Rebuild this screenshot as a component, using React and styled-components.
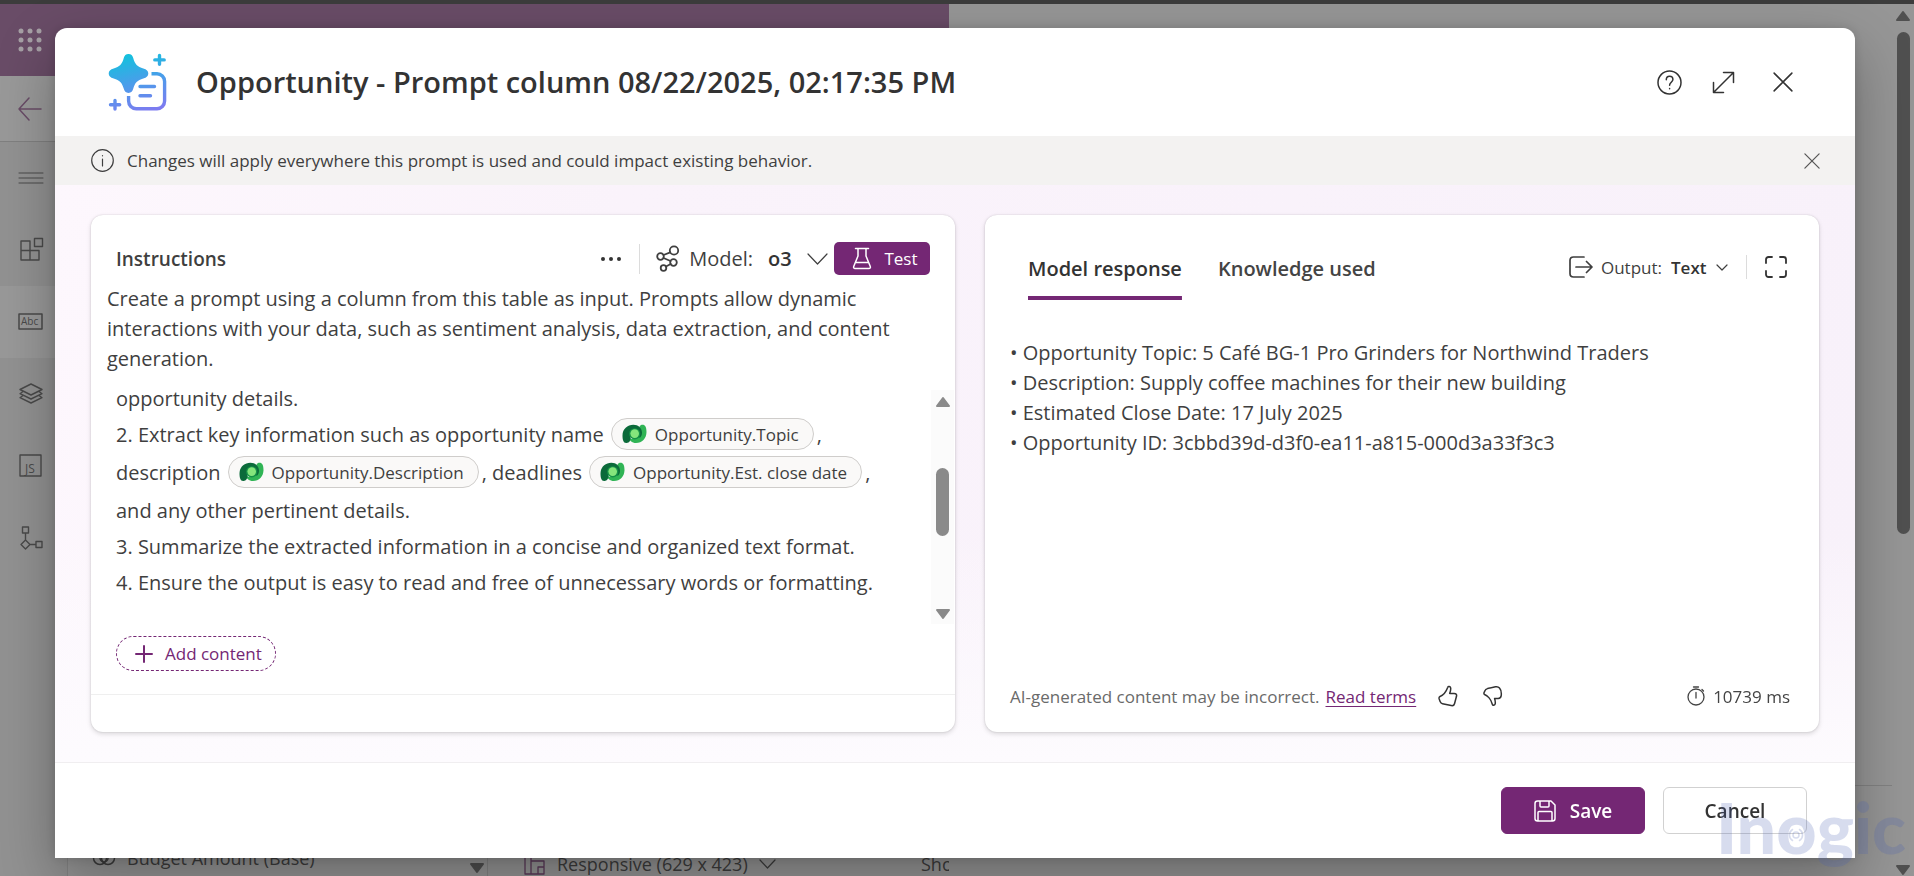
import React from "react";
import styled, { createGlobalStyle, css } from "styled-components";

const color = {
  brand: "#742774",
  ink: "#333333",
  text: "#3f3f3f",
  muted: "#6a6a6a",
};

const Global = createGlobalStyle`
  *, *::before, *::after { box-sizing: border-box; }
  body {
    margin: 0;
    overflow: hidden;
    font-family: "Segoe UI", "Open Sans", "Noto Sans", sans-serif;
    font-size: 18px;
    color: ${color.text};
    background: #969696;
  }
  button, select { font: inherit; color: inherit; }
  svg { display: block; flex: none; }
`;

/* ---------- page behind the dialog ---------- */

const Page = styled.div`
  height: 100vh;
  display: grid;
  grid-template-columns: calc(50% - 8px) 1fr 22px;
  border-top: 4px solid #3c3c3c;
`;

const Designer = styled.div`
  display: flex;
  flex-direction: column;
  min-width: 0;
`;

const SuiteBar = styled.header`
  height: 72px;
  flex: none;
  padding-left: 18px;
  display: flex;
  align-items: center;
  background: #694c67;
`;

const Workspace = styled.div`
  flex: 1;
  min-height: 0;
  display: flex;
`;

const Rail = styled.nav`
  width: 68px;
  flex: none;
  border-right: 1px solid #868686;
  background: #929292;
`;

const RailButton = styled.button`
  width: 100%;
  height: 72px;
  padding: 0 0 0 18px;
  display: flex;
  align-items: center;
  border: 0;
  color: #4a4a4a;
  background: ${(p) => (p.$selected ? "#999999" : "#929292")};
  ${(p) =>
    p.$back &&
    css`
      height: 66px;
      color: #694c67;
      background: #999999;
      border-bottom: 1px solid #808080;
    `}
`;

const Column = styled.div`
  display: flex;
  align-items: flex-end;
  height: 100%;
  padding: 0 0 6px 24px;
  color: #3d3d3d;
  white-space: nowrap;
`;

const FieldColumn = styled(Column)`
  width: 420px;
  flex: none;
  justify-content: space-between;
  border-right: 1px solid #868686;
`;

const ColumnArrow = styled.span`
  height: 8px;
  margin-right: 2px;
  color: #505050;
`;

const PreviewColumn = styled(Column)`
  flex: 1;
  min-width: 0;
  overflow: hidden;
  gap: 12px;
  padding: 0 0 0 36px;
`;

const PushRight = styled.span`
  margin-left: auto;
  width: 28px;
`;

const Field = styled.span`
  display: flex;
  align-items: center;
  gap: 11px;
  font-size: 18px;
  line-height: 24px;
`;

const Properties = styled.aside`
  display: flex;
  flex-direction: column;
  justify-content: flex-end;
  padding-bottom: 90px;
`;

const Rule = styled.hr`
  width: 100%;
  margin: 0;
  border: 0;
  border-top: 1px solid #828282;
`;

/* ---------- scroll bars ---------- */

const ScrollTrack = styled.div`
  display: flex;
  flex-direction: column;
  align-items: center;
  justify-content: space-between;
  color: ${(p) => (p.$dim ? "#505050" : "#8a8a8a")};
  background: ${(p) => (p.$dim ? "transparent" : "#fbfbfb")};
  padding: ${(p) => (p.$dim ? "6px 0 0 0" : "6px 0 4px")};
`;

const ScrollThumb = styled.div`
  width: 13px;
  flex: 0 0 ${(p) => p.$length};
  border-radius: 7px;
  background: currentColor;
`;

const ScrollSpace = styled.div`
  flex: ${(p) => p.$share};
`;

/* ---------- dialog ---------- */

const Overlay = styled.div`
  position: fixed;
  inset: 0;
  display: flex;
  padding: 28px 59px 18px 55px;
`;

const Dialog = styled.section`
  flex: 1;
  min-width: 0;
  display: flex;
  flex-direction: column;
  overflow: hidden;
  border-radius: 12px 12px 0 0;
  background: #fff;
`;

const DialogShadow = styled.div`
  flex: 1;
  min-width: 0;
  display: flex;
  border-radius: 12px 12px 0 0;
  box-shadow: 0 0 12px rgba(0, 0, 0, 0.14), 0 24px 60px rgba(0, 0, 0, 0.3);
`;

const DialogHeader = styled.header`
  height: 108px;
  flex: none;
  display: flex;
  align-items: center;
  padding: 0 50px 0 53px;
`;

const DialogTitle = styled.h1`
  flex: 1;
  margin: 0 0 0 29px;
  font-size: 29px;
  line-height: 36px;
  font-weight: 600;
  color: ${color.ink};
`;

const HeaderActions = styled.div`
  display: flex;
  gap: 22px;
`;

const IconButton = styled.button`
  width: ${(p) => p.$width || 32}px;
  height: 32px;
  padding: 0;
  display: flex;
  align-items: center;
  justify-content: center;
  flex: none;
  border: 0;
  background: none;
  color: ${(p) => p.$tone || color.ink};
`;

const Notice = styled.div`
  height: 49px;
  flex: none;
  display: flex;
  align-items: center;
  gap: 13px;
  padding: 0 35px 0 36px;
  background: #f3f2f1;
`;

const NoticeText = styled.p`
  flex: 1;
  margin: 0;
  font-size: 17px;
  line-height: 24px;
`;

const DialogBody = styled.div`
  flex: 1;
  min-height: 0;
  display: grid;
  grid-template-columns: 864fr 834fr;
  gap: 30px;
  padding: 30px 36px;
  background:
    linear-gradient(180deg, rgba(253, 251, 254, 0) 60%, #fdfbfe 100%),
    linear-gradient(100deg, #fdf7fd 0%, #faf3fb 30%, #f8f1fa 100%);
`;

const Panel = styled.section`
  min-width: 0;
  display: flex;
  flex-direction: column;
  border-radius: 12px;
  background: #fff;
  box-shadow: 0 0 2px rgba(0, 0, 0, 0.14), 0 2px 5px rgba(0, 0, 0, 0.14);
`;

const DialogFooter = styled.footer`
  height: 96px;
  flex: none;
  display: flex;
  align-items: center;
  justify-content: flex-end;
  gap: 18px;
  padding: 0 48px;
  border-top: 1px solid #f0eef0;
`;

const FooterButton = styled.button`
  width: 144px;
  height: 47px;
  display: flex;
  align-items: center;
  justify-content: center;
  gap: 14px;
  padding: 0;
  border-radius: 6px;
  font-size: 19px;
  font-weight: 600;
  border: 1px solid ${(p) => (p.$primary ? color.brand : "#d1d1d1")};
  color: ${(p) => (p.$primary ? "#fff" : color.ink)};
  background: ${(p) => (p.$primary ? color.brand : "#fff")};
`;

/* ---------- instructions panel ---------- */

const PanelHeader = styled.div`
  display: flex;
  align-items: center;
  height: 33px;
  margin: 27px 25px 9px;
`;

const PanelTitle = styled.h2`
  flex: 1;
  margin: 0;
  font-size: 19px;
  font-weight: 600;
`;

const Divider = styled.span`
  width: 1px;
  height: ${(p) => p.$height}px;
  margin: 0 ${(p) => p.$gap}px;
  background: #dcdcdc;
`;

const Picker = styled.div`
  display: flex;
  align-items: center;
  font-size: ${(p) => p.$size}px;
  white-space: nowrap;

  label { margin: ${(p) => p.$labelMargin}; }
`;

const PickerSelect = styled.select`
  appearance: none;
  border: 0;
  padding: 0;
  margin-right: ${(p) => p.$gap}px;
  background: none;
  font-weight: 600;
  color: ${color.ink};
`;

const TestButton = styled.button`
  width: 96px;
  height: 33px;
  margin-left: 6px;
  padding: 0 0 0 6px;
  display: flex;
  align-items: center;
  justify-content: center;
  gap: 12px;
  border: 0;
  border-radius: 5px;
  font-size: 17px;
  color: #fff;
  background: ${color.brand};
`;

const Hint = styled.p`
  margin: 0 60px 6px 16px;
  font-size: 20px;
  line-height: 30px;
`;

const EditorRow = styled.div`
  flex: 1;
  min-height: 0;
  display: flex;
  justify-content: space-between;
  padding-right: 1px;

  ${ScrollTrack} {
    width: 23px;
    margin-top: 10px;
  }
`;

const Editor = styled.div`
  padding-left: 25px;
  font-size: 20px;
`;

const Line = styled.div`
  display: flex;
  align-items: center;
  min-height: ${(p) => (p.$tall ? 40 : 36)}px;
  white-space: pre;
`;

const Chip = styled.span`
  height: 32px;
  display: inline-flex;
  align-items: center;
  gap: 8px;
  margin: 0 3px 0 7px;
  padding: 0 14px 0 10px;
  border: 1px solid #cfcdcb;
  border-radius: 16px;
  background: #faf9f8;
  font-size: 17px;
`;

const EditorActions = styled.div`
  padding: 12px 25px 23px;
  border-bottom: 1px solid #efefef;
`;

const AddButton = styled.button`
  height: 35px;
  display: flex;
  align-items: center;
  gap: 12px;
  padding: 0 13px 0 18px;
  border: 1px dashed ${color.brand};
  border-radius: 18px;
  font-size: 17px;
  color: ${color.brand};
  background: #fff;
`;

const PanelFoot = styled.div`
  height: 37px;
  flex: none;
`;

/* ---------- response panel ---------- */

const ResponseHeader = styled.div`
  display: flex;
  align-items: center;
  justify-content: space-between;
  height: 48px;
  margin: 28px 32px 47px 43px;
`;

const Tabs = styled.div`
  display: flex;
  gap: 36px;
  margin-top: 20px;
`;

const Tab = styled.button`
  padding: 0 0 17px;
  font-size: 20px;
  line-height: 28px;
  font-weight: 600;
  border: 0;
  background: linear-gradient(${(p) => (p.$active ? color.brand : "transparent")} 0 0) bottom / 100% 4px no-repeat;
  color: ${(p) => (p.$active ? color.ink : "#444")};
  white-space: nowrap;
`;

const Tools = styled.div`
  display: flex;
  align-items: center;
`;

const Response = styled.ul`
  flex: 1;
  margin: 0;
  padding: 0 25px;
  list-style: none;
  font-size: 20px;
  line-height: 30px;

  li::before { content: "• "; }
`;

const ResponseFooter = styled.div`
  display: flex;
  align-items: center;
  height: 32px;
  margin: 0 29px 20px 25px;
  font-size: 17px;
  color: ${color.muted};
  white-space: nowrap;
`;

const Terms = styled.a`
  margin: 0 16px 0 6px;
  color: ${color.brand};
  text-decoration: underline;
  text-underline-offset: 3px;
`;

const Feedback = styled.div`
  display: flex;
  gap: 13px;
`;

const Duration = styled.span`
  display: flex;
  align-items: center;
  gap: 8px;
  margin-left: auto;
  color: #444;
`;

const Watermark = styled.div`
  position: fixed;
  right: 8px;
  bottom: 12px;
  font-family: Lato, sans-serif;
  font-size: 70px;
  line-height: 74px;
  font-weight: 900;
  color: rgba(72, 96, 176, 0.22);
  pointer-events: none;
`;

const WatermarkRing = styled.span`
  position: relative;

  svg {
    position: absolute;
    inset: 0;
    margin: auto;
    top: 16px;
  }
`;

/* ---------- icons ---------- */

const Svg = ({ w = 24, h = w, sw = 1, box, children }) => (
  <svg
    width={w}
    height={h}
    viewBox={box || `0 0 ${w} ${h}`}
    fill="none"
    stroke="currentColor"
    strokeWidth={sw}
    strokeLinecap="round"
    strokeLinejoin="round"
    aria-hidden="true"
  >
    {children}
  </svg>
);

const Triangle = ({ down }) => (
  <Svg w={16} h={12}>
    <path d={down ? "M2 2h12L8 10z" : "M2 10h12L8 2z"} fill="currentColor" strokeWidth="2" />
  </Svg>
);

const Waffle = () => (
  <svg width="26" height="26" viewBox="0 0 26 26" fill="#a6a0a5" aria-hidden="true">
    {[4, 13, 22].map((y) => [3, 12, 21].map((x) => <circle key={`${x}-${y}`} cx={x} cy={y} r="2.5" />))}
  </svg>
);

const PromptLogo = () => (
  <svg width="59" height="60" viewBox="0 0 59 60" aria-hidden="true">
    <defs>
      <linearGradient id="promptFill" gradientUnits="userSpaceOnUse" x1="20" y1="0" x2="36" y2="60">
        <stop offset="0" stopColor="#0fc4dc" />
        <stop offset="0.5" stopColor="#499eea" />
        <stop offset="1" stopColor="#7d7bf0" />
      </linearGradient>
    </defs>
    <path
      d="M20.500 2c2.600 0 4.200 1.600 4.800 4.200 1.400 5.800 4.200 8.600 10 10.200 3.400.9 5 2.500 5 5s-1.600 4.100-5 5c-5.800 1.600-8.600 4.400-10 10.200-.6 2.600-2.200 4.400-4.800 4.400s-4.200-1.800-4.800-4.400c-1.400-5.800-4.200-8.600-10-10.200-3.400-.9-5-2.500-5-5s1.600-4.100 5-5c5.800-1.600 8.600-4.400 10-10.200.6-2.600 2.200-4.200 4.800-4.200z"
      fill="url(#promptFill)"
    />
    <g fill="none" stroke="url(#promptFill)" strokeWidth="3.400" strokeLinecap="round">
      <path d="M51.500 3.500v8.800M46.800 7.900h9.400M7 48.500v8.600M2.500 52.800h9.200" />
      <path d="M32 34.500h14.500M32 43.700h10.500" />
      <path strokeLinecap="butt" d="M43.500 21.800h5.500a7.600 7.600 0 0 1 7.600 7.600v19.700a7.600 7.600 0 0 1-7.600 7.600H28.200a7.600 7.600 0 0 1-7.600-7.600v-5" />
    </g>
  </svg>
);

const Dataverse = () => (
  <svg width="25" height="20" viewBox="0 0 25 20" aria-hidden="true">
    <path d="M19 1c3.500-1 5.500 1 5.500 7 0 6.500-4.500 11-10.500 11-4 0-7-2.500-7-6 3 4 10 2 10-5 0-4 0-6 2-7z" fill="#30b455" />
    <path d="M4.500 19C1.500 19.300.5 16 .5 11.500.5 5 5.500.700 11.300.700c5 0 8.700 3.300 8.700 8 0 2-.7 3.600-1.800 4.800L8.500 13c.3 3-1 6-4 6z" fill="#0b6a3a" />
    <circle cx="12.700" cy="9.800" r="5.600" fill="#159247" />
    <circle cx="12.700" cy="9.600" r="4.300" fill="#85e57c" />
  </svg>
);

const CloseIcon = ({ size, sw }) => (
  <Svg w={size} sw={sw} box="0 0 18 18"><path d="M1 1l16 16M17 1L1 17" /></Svg>
);

const Chevron = ({ w, h }) => (
  <Svg w={w} h={h} box={`0 0 ${w} ${h}`} sw={1.2}><path d={`M1 1L${w / 2} ${h - 1}L${w - 1} 1`} /></Svg>
);

const ThumbUp = () => (
  <Svg w={20} h={22} sw={1.500}>
    <path d="M2 11.500C4.500 10.500 8 7 9.800 2.200c.4-1.200 2.700-.8 2.900 1 .1 1.600-.4 3.700-1 5.200h4.500c1.900 0 2.700 1.200 2.300 2.900l-2 7.400c-.4 1.500-1.600 2.300-3.300 1.900L4.500 18.800c-1.400-.3-1.900-1-2.400-2.300L1.200 14c-.4-1.200-.2-2 .8-2.500z" />
  </Svg>
);

const ThumbDown = () => (
  <Svg w={20} h={22} sw={1.500}>
    <path d="M1.500 9.500C4 10.500 8 14 9.300 19.200c.4 1.500 2.600 1.200 2.900-.4.300-1.800-.1-3.700-.6-5.300h3.600c2 0 2.800-1 3-2.800.4-3.300-.1-5.900-1.700-7.700-1-1.200-2.300-1.500-4-1.200L4.500 3.600C3 4 2.300 4.600 1.900 5.900L1.100 7.500c-.3.900-.2 1.600.4 2z" />
  </Svg>
);

const Model = () => (
  <Svg w={24} h={27} sw={1.800}>
    <circle cx="18" cy="5.500" r="4.200" /><circle cx="4.500" cy="11.500" r="3.300" />
    <circle cx="17.500" cy="17.500" r="3.300" /><circle cx="7.500" cy="23" r="2.800" />
    <path d="M7.500 10l6.800-2.700M7.500 13l7 3M10 21.500l4.700-2.500" />
  </Svg>
);

const railItems = [
  ["Menu", <Svg w={26} h={14}><path d="M1 2h24M1 7h24M1 12h24" /></Svg>],
  ["Components", <Svg w={26} sw={1.400}><path d="M3 4h9v19H3zM3 13.500h18V23H12M12 13.500V23M16.500 1.500h8v8h-8z" /></Svg>],
  ["Table columns", <Svg w={26} h={18} sw={1.500}>
    <rect x="1" y="1" width="23" height="15" />
    <text x="3" y="12" fontSize="10" fill="currentColor" stroke="none">Abc</text>
  </Svg>, true],
  ["Tree view", <Svg w={26} h={24} sw={1.400}>
    <path d="M13 2l11 5.500L13 13 2 7.500zM5 9.500l-3 2.200L13 17l11-5.300-3-2.200M5 13.500l-3 2.200L13 21l11-5.300-3-2.200" />
  </Svg>],
  ["Form libraries", <Svg w={26} h={24} sw={1.400}>
    <rect x="2" y="1" width="21" height="21" />
    <text x="7" y="19" fontSize="12" fill="currentColor" stroke="none">JS</text>
  </Svg>],
  ["Business rules", <Svg w={26} sw={1.400}><path d="M4.500 2h6v6h-6zM7.500 8v7M7.500 15l4.500 4.500L7.500 24 3 19.500zM12 19.500h6M18 16.500h6v6h-6z" /></Svg>],
];

function VariableChip({ children }) {
  return <Chip><Dataverse />{children}</Chip>;
}

function Background() {
  return (
    <Page>
      <Designer>
        <SuiteBar><Waffle /></SuiteBar>
        <Workspace>
          <Rail>
            <RailButton $back aria-label="Back">
              <Svg w={26} h={24} sw={1.500}><path d="M23 12H1M11 1L1 12l10 11" /></Svg>
            </RailButton>
            {railItems.map(([label, icon, selected]) => (
              <RailButton key={label} aria-label={label} $selected={selected}>{icon}</RailButton>
            ))}
          </Rail>
          <FieldColumn>
            <Field>
              <Svg w={24} h={16} sw={1.500}><circle cx="8" cy="8" r="6.500" /><circle cx="16" cy="8" r="6.500" /><circle cx="12" cy="8" r="4" /></Svg>
              Budget Amount (Base)
            </Field>
            <ColumnArrow><Triangle down /></ColumnArrow>
          </FieldColumn>
          <PreviewColumn>
            <Field>
              <Svg w={22} sw={1.300}><g stroke="#5c3a5a"><path d="M1 1h6v20H1zM7 8h13v13H7M14 14h6v7h-6z" /></g></Svg>
              Responsive (629 x 423)
              <Chevron w={17} h={10} />
            </Field>
            <PushRight>Sho</PushRight>
          </PreviewColumn>
        </Workspace>
      </Designer>
      <Properties><Rule /></Properties>
      <ScrollTrack $dim>
        <Triangle />
        <ScrollSpace $share="0 0 10px" />
        <ScrollThumb $length="58%" />
        <ScrollSpace $share={1} />
        <Triangle down />
      </ScrollTrack>
    </Page>
  );
}

function Instructions() {
  return (
    <Panel>
      <PanelHeader>
        <PanelTitle>Instructions</PanelTitle>
        <IconButton $width={24} aria-label="More options">
          <Svg w={22} h={6}><g fill="currentColor" stroke="none"><circle cx="3" cy="3" r="2" /><circle cx="11" cy="3" r="2" /><circle cx="19" cy="3" r="2" /></g></Svg>
        </IconButton>
        <Divider $height={30} $gap={16} />
        <Picker $size={20} $labelMargin="0 15px 0 9px">
          <Model />
          <label htmlFor="model">Model:</label>
          <PickerSelect id="model" $gap={15}><option>o3</option></PickerSelect>
          <Chevron w={21} h={12} />
        </Picker>
        <TestButton>
          <Svg w={20} h={23} sw={1.500}><path d="M3.500 1.500h13M6 1.500V9L1.700 19.500c-.4 1.200.2 2 1.300 2h14c1.100 0 1.700-.8 1.300-2L14 9V1.500M4 15.500h12" /></Svg>
          Test
        </TestButton>
      </PanelHeader>
      <Hint>
        Create a prompt using a column from this table as input. Prompts allow dynamic
        interactions with your data, such as sentiment analysis, data extraction, and content
        generation.
      </Hint>
      <EditorRow>
        <Editor>
          <Line>opportunity details.</Line>
          <Line>2. Extract key information such as opportunity name<VariableChip>Opportunity.Topic</VariableChip>,</Line>
          <Line $tall>description<VariableChip>Opportunity.Description</VariableChip>, deadlines<VariableChip>Opportunity.Est. close date</VariableChip>,</Line>
          <Line>and any other pertinent details.</Line>
          <Line>3. Summarize the extracted information in a concise and organized text format.</Line>
          <Line>4. Ensure the output is easy to read and free of unnecessary words or formatting.</Line>
        </Editor>
        <ScrollTrack>
          <Triangle />
          <ScrollSpace $share={59} />
          <ScrollThumb $length="68px" />
          <ScrollSpace $share={70} />
          <Triangle down />
        </ScrollTrack>
      </EditorRow>
      <EditorActions>
        <AddButton>
          <Svg w={18} sw={2}><path d="M9 1v16M1 9h16" /></Svg>
          Add content
        </AddButton>
      </EditorActions>
      <PanelFoot />
    </Panel>
  );
}

function ModelResponse() {
  return (
    <Panel>
      <ResponseHeader>
        <Tabs role="tablist">
          <Tab role="tab" aria-selected="true" $active>Model response</Tab>
          <Tab role="tab" aria-selected="false">Knowledge used</Tab>
        </Tabs>
        <Tools>
          <Picker $size={17} $labelMargin="0 9px 0 8px">
            <Svg w={24} h={22} sw={1.700}><path d="M15 1H4.500C2.500 1 1 2.500 1 4.500v13C1 19.500 2.500 21 4.500 21H15M7 11h15.500M17.500 5.500L23 11l-5.500 5.500" /></Svg>
            <label htmlFor="output">Output:</label>
            <PickerSelect id="output" $gap={9}><option>Text</option></PickerSelect>
            <Chevron w={12} h={7} />
          </Picker>
          <Divider $height={24} $gap={18} />
          <IconButton $width={22} aria-label="Full screen">
            <Svg w={22} sw={1.800}><path d="M1 7V3.500C1 2 2 1 3.500 1H7M15 1h3.500C20 1 21 2 21 3.500V7M21 15v3.500c0 1.500-1 2.500-2.500 2.500H15M7 21H3.500C2 21 1 20 1 18.500V15" /></Svg>
          </IconButton>
        </Tools>
      </ResponseHeader>
      <Response>
        <li>Opportunity Topic: 5 Café BG-1 Pro Grinders for Northwind Traders</li>
        <li>Description: Supply coffee machines for their new building</li>
        <li>Estimated Close Date: 17 July 2025</li>
        <li>Opportunity ID: 3cbbd39d-d3f0-ea11-a815-000d3a33f3c3</li>
      </Response>
      <ResponseFooter>
        AI-generated content may be incorrect.
        <Terms href="#terms">Read terms</Terms>
        <Feedback>
          <IconButton aria-label="Like"><ThumbUp /></IconButton>
          <IconButton aria-label="Dislike"><ThumbDown /></IconButton>
        </Feedback>
        <Duration>
          <Svg w={18} h={20} sw={1.300}><circle cx="9" cy="11" r="8" /><path d="M9 6.500V12M6.500 1h5M15 3.500l1.500 1.500" /></Svg>
          10739 ms
        </Duration>
      </ResponseFooter>
    </Panel>
  );
}

export default function App() {
  return (
    <>
      <Global />
      <Background />
      <Overlay>
        <DialogShadow>
          <Dialog role="dialog" aria-labelledby="dialog-title">
            <DialogHeader>
              <PromptLogo />
              <DialogTitle id="dialog-title">Opportunity - Prompt column 08/22/2025, 02:17:35 PM</DialogTitle>
              <HeaderActions>
                <IconButton aria-label="Help">
                  <Svg w={25} sw={1.500}>
                    <circle cx="12.500" cy="12.500" r="11.500" />
                    <path d="M9.300 9.800c0-2.200 1.400-3.500 3.300-3.500s3.300 1.300 3.300 3.200c0 2.500-3.300 3.200-3.300 5.800M12.600 18.600v.2" />
                  </Svg>
                </IconButton>
                <IconButton aria-label="Expand">
                  <Svg w={23} sw={1.500}><path d="M1.500 21.500l20-20M11.500 1.500h10v10M1.500 11.500v10h10" /></Svg>
                </IconButton>
                <IconButton $width={44} aria-label="Close"><CloseIcon size={20} sw={1.400} /></IconButton>
              </HeaderActions>
            </DialogHeader>
            <Notice>
              <Svg w={23} sw={1.200}><circle cx="11.500" cy="11.500" r="10.800" /><path d="M11.500 10v7M11.500 6.500v.3" /></Svg>
              <NoticeText>Changes will apply everywhere this prompt is used and could impact existing behavior.</NoticeText>
              <IconButton $width={16} $tone="#5a5a5a" aria-label="Dismiss"><CloseIcon size={16} sw={1.400} /></IconButton>
            </Notice>
            <DialogBody>
              <Instructions />
              <ModelResponse />
            </DialogBody>
            <DialogFooter>
              <FooterButton $primary>
                <Svg w={22} sw={1.500}><path d="M1 3.500C1 2 2 1 3.500 1H17l4 4v13.500c0 1.500-1 2.500-2.500 2.500h-15C2 21 1 20 1 18.500zM6 1v5c0 .7.300 1 1 1h7c.7 0 1-.3 1-1V1M4 21v-8.500c0-.7.300-1 1-1h12c.7 0 1 .3 1 1V21" /></Svg>
                Save
              </FooterButton>
              <FooterButton>Cancel</FooterButton>
            </DialogFooter>
          </Dialog>
        </DialogShadow>
      </Overlay>
      <Watermark>
        In
        <WatermarkRing>
          o
          <Svg w={16} sw={1.500}>
            <circle cx="8" cy="8" r="3" />
            <path d="M4.500 2.500a6.500 6.500 0 0 0 0 11M11.500 2.500a6.500 6.500 0 0 1 0 11" />
          </Svg>
        </WatermarkRing>
        gic
      </Watermark>
    </>
  );
}
